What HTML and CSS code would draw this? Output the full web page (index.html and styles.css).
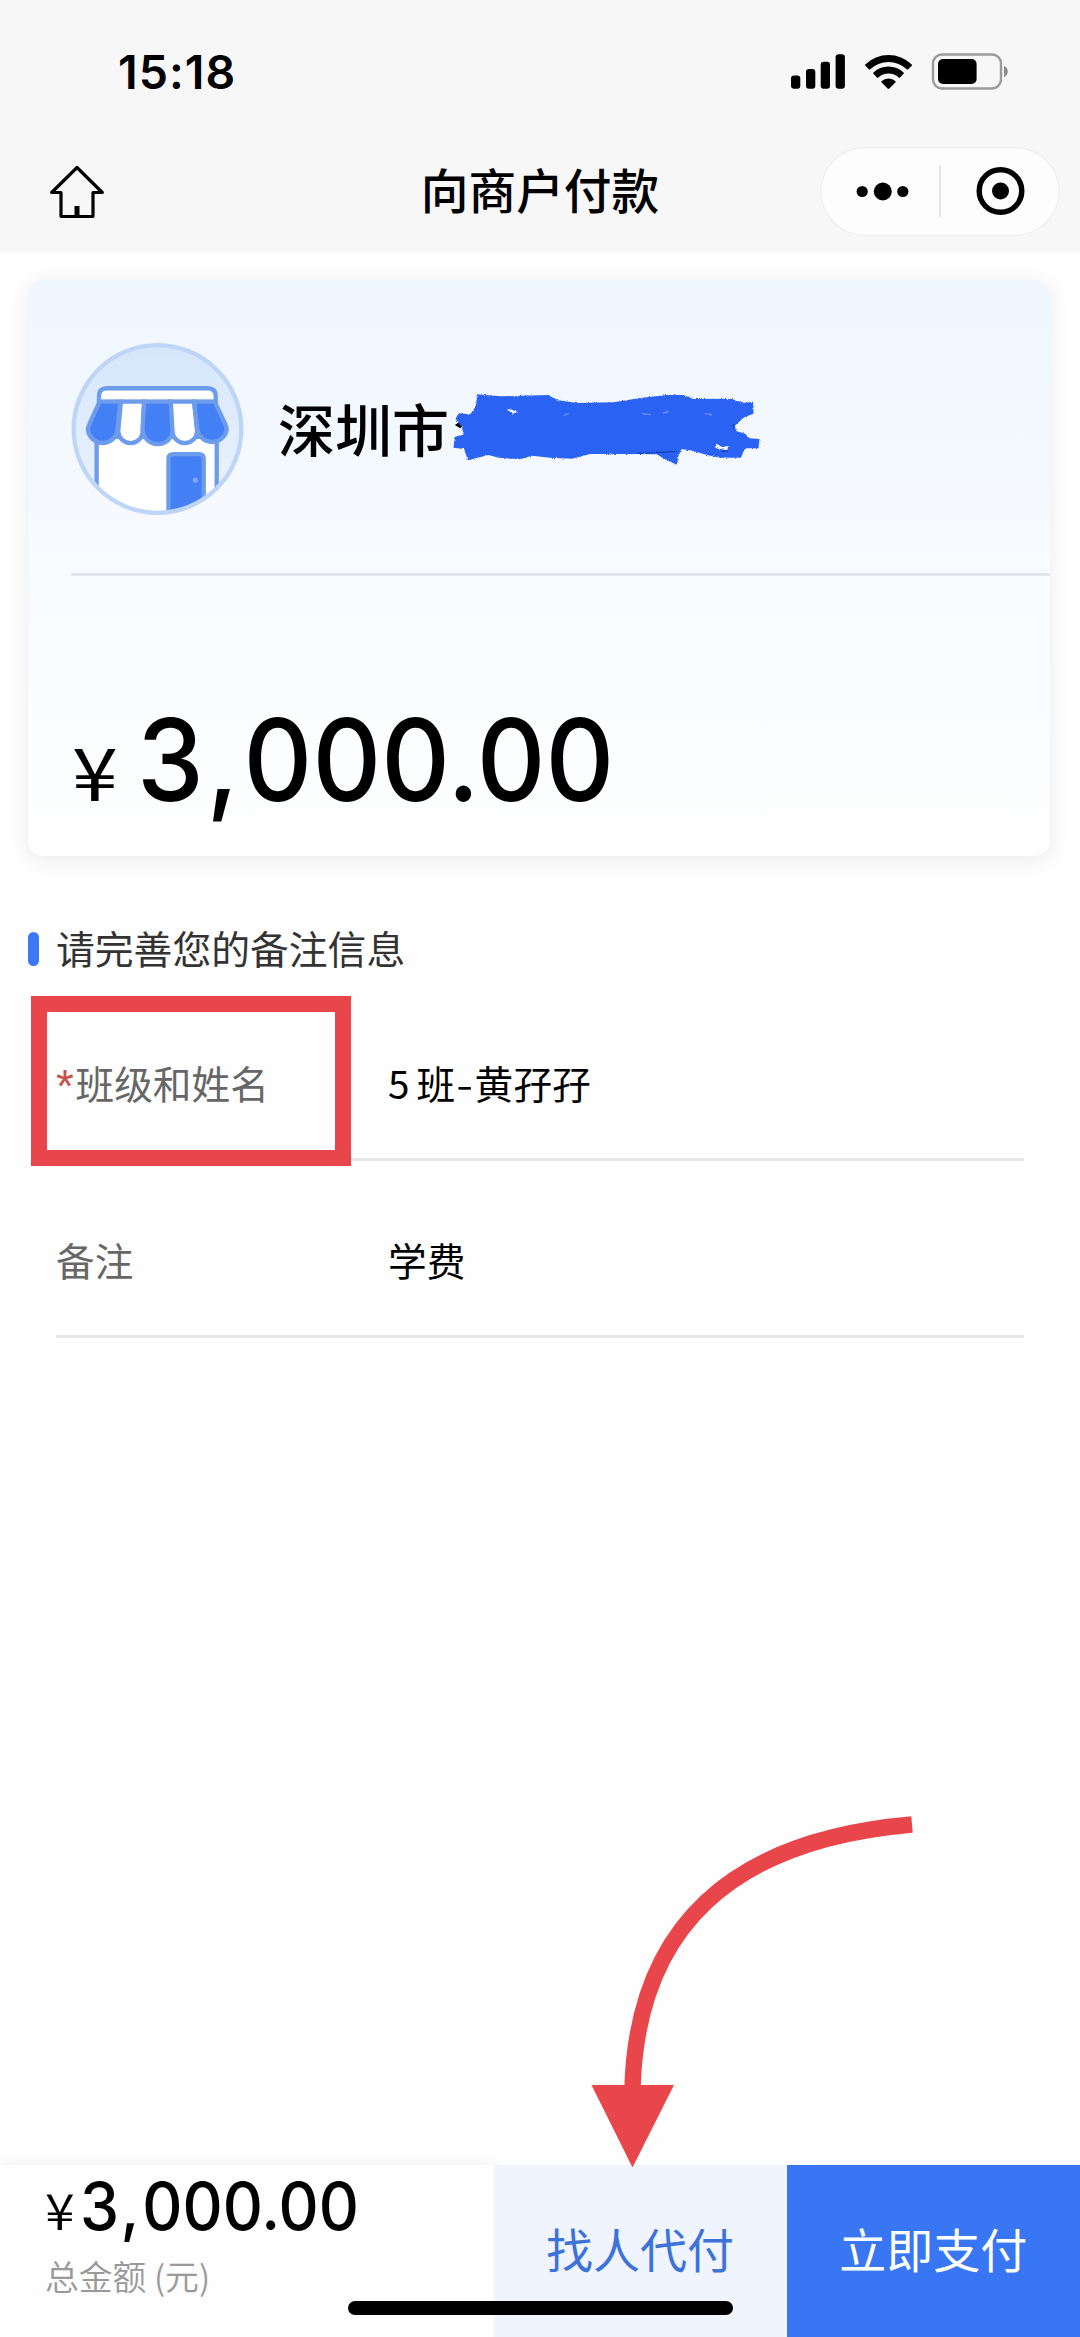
FILE: index.html
```html
<!DOCTYPE html>
<html lang="zh-CN">
<head>
<meta charset="utf-8">
<title>向商户付款</title>
<link rel="stylesheet" href="styles.css">
</head>
<body>
<div class="screen">
  <header class="top">
    <div class="status">
      <span class="time">15:18</span>
      <svg class="status-icons" viewBox="0 0 218 37" width="218" height="37">
        <rect x="0" y="22.5" width="9.3" height="13.2" rx="3"/>
        <rect x="15" y="16" width="9.3" height="19.7" rx="3"/>
        <rect x="29.7" y="8.7" width="9.3" height="27" rx="3"/>
        <rect x="44.6" y="1.3" width="9.3" height="34.4" rx="3"/>
        <path d="M74.2 11.4a33.5 33.5 0 0 1 46.6 0.1l.2.9-4 4.2-.9-.1a27 27 0 0 0-37.2 0l-.9.1-4-4.3zM82.2 19.7a22 22 0 0 1 30.6 0v.9l-4 4.1h-.9a15.3 15.3 0 0 0-20.8 0h-.9l-4-4.1zM90.4 28.3a10.5 10.5 0 0 1 14.2 0v1l-6.5 6.5h-1.2l-6.5-6.5z"/>
        <rect x="142" y="1.5" width="68" height="34" rx="9" fill="none" stroke="#9b9b9b" stroke-width="2.4"/>
        <rect x="147" y="6" width="38.6" height="25" rx="5"/>
        <path d="M213 13c5 1.500 5 9.500 0 11z" fill="#8c8c8c"/>
      </svg>
    </div>
    <div class="nav">
      <svg class="home" viewBox="0 0 54 54" width="54" height="54">
        <path d="M27 2.500 1.700 27.500H11v23q0 1 1 1h30q1 0 1-1v-23h9.300z" fill="none" stroke="#000" stroke-width="3.200" stroke-linejoin="round"/>
        <path d="M24.500 41h5v11h-5z"/>
      </svg>
      <h1 class="title">向商户付款</h1>
      <div class="capsule">
        <svg viewBox="0 0 240 88" width="240" height="88">
          <circle cx="42.200" cy="44.500" r="5.600"/><circle cx="62.800" cy="44.500" r="9"/><circle cx="82.800" cy="44.500" r="5.600"/>
          <path d="M120 18v52" stroke="#dedede" stroke-width="1.500"/>
          <circle cx="180.500" cy="44" r="21.300" fill="none" stroke="#000" stroke-width="5.400"/><circle cx="180.500" cy="44" r="8.500"/>
        </svg>
      </div>
    </div>
  </header>

  <main class="content">
    <section class="card">
      <div class="merchant">
        <svg class="shop" viewBox="153 218 518 517" width="173" height="172">
          <defs>
            <clipPath id="disc"><circle cx="412" cy="476.500" r="250"/></clipPath>
            <linearGradient id="sky" x1="0" y1="0" x2="0" y2="1"><stop offset="0" stop-color="#d5e6fc"/><stop offset="1" stop-color="#ecf4ff"/></linearGradient>
          </defs>
          <circle cx="412" cy="476.500" r="250" fill="url(#sky)"/>
          <g clip-path="url(#disc)" stroke="#6d9cec" stroke-width="13">
            <path d="M229 500V750H590V500z" fill="#fff"/>
            <path d="M445 750V566q0-14 14-14h78q14 0 14 14v184z" fill="#437ff5"/>
            <path d="M236 395v-17q0-24 24-24h303q24 0 24 24v17z" fill="#fff"/>
            <path d="M238 394h62l-8 78v8a45 45 0 0 1-89 0q0-10 4-18z" fill="#437ff5"/>
            <path d="M302 394h70l-4 88a37 37 0 0 1-74 0z" fill="#fff"/>
            <path d="M372 394h80l7 82a46 46 0 0 1-92 0z" fill="#437ff5"/>
            <path d="M452 394h70l9 88a37 37 0 0 1-74 0z" fill="#fff"/>
            <path d="M522 394h62l32 69q4 8 4 17a45 45 0 0 1-88 0z" fill="#437ff5"/>
            <circle cx="526" cy="630" r="8" fill="#78a8ff" stroke="none"/>
          </g>
          <circle cx="412" cy="476.500" r="252" fill="none" stroke="#bfd5f7" stroke-width="13"/>
        </svg>
        <span class="name">深圳市</span>
        <svg class="redaction" viewBox="90 120 950 240" width="317" height="80">
          <defs><filter id="rough" x="-5%" y="-10%" width="110%" height="120%"><feTurbulence type="fractalNoise" baseFrequency=".5" numOctaves="2" seed="4"/><feDisplacementMap in="SourceGraphic" scale="8" xChannelSelector="R" yChannelSelector="G"/></filter></defs>
          <path d="M104 228 158 192 169 165 178 180 120 238z"/>
          <g filter="url(#rough)">
            <path fill="#2a62f3" d="M170 136 240 142 385 138 410 153 470 162 580 160 660 147 740 138 790 138 820 150 880 149 935 150 970 162 999 158 1000 194 972 205 944 230 948 246 975 254 988 268 1018 270 1015 298 975 298 962 326 900 326 860 318 820 306 785 300 775 320 770 347 738 333 710 316 600 315 510 315 455 329 390 326 335 320 300 331 235 326 205 318 143 334 132 300 100 296 104 264 130 255 124 230 106 210 115 193 150 196 168 172z"/>
            <path fill="#f4f8ff" d="M885 297 890 284 905 294 925 291 921 304zM258 180 275 182 292 189 278 194z"/>
            <path d="M430 199 445 195M665 193l25 4M728 192l18-4M855 194l20 4" stroke="#6a91f5" stroke-width="4" fill="none"/>
            <path d="M650 313 770 308M939 226v12M903 307h20" stroke="#163fb4" stroke-width="4" fill="none"/>
          </g>
        </svg>
      </div>
      <div class="amount"><span class="yen">¥</span><span class="digits">3<span class="comma">,</span>000.00</span></div>
    </section>

    <h2 class="section-title">请完善您的备注信息</h2>
    <div class="fields">
      <div class="field">
        <span class="label"><i class="star">*</i>班级和姓名</span>
        <span class="value"><span class="num">5</span>班<span class="dash">-</span>黄孖孖</span>
        <div class="highlight"></div>
      </div>
      <div class="field">
        <span class="label">备注</span>
        <span class="value">学费</span>
      </div>
    </div>
  </main>

  <footer class="paybar">
    <div class="total">
      <div class="sum"><span class="yen">¥</span><span class="digits">3<span class="comma">,</span>000.00</span></div>
      <div class="caption">总金额 (元)</div>
    </div>
    <div class="button ask">找人代付</div>
    <div class="button pay">立即支付</div>
    <svg class="arrow" viewBox="0 0 340 360" width="340" height="360" fill="#e8464b">
      <path d="M331 17.500Q59 41 51.500 280" fill="none" stroke="#e8464b" stroke-width="16.400"/>
      <path d="M10.500 278h82.500L51.500 360.500z"/>
    </svg>
    <div class="home-indicator"></div>
  </footer>
</div>
</body>
</html>
```
FILE: styles.css
```css
* { box-sizing: border-box; }
body { margin: 0; background: #fefefe; color: #000; font-family: "Noto Sans CJK SC", sans-serif; }
.screen { width: 1080px; height: 2337px; display: flex; flex-direction: column; overflow: hidden; }
.top { height: 252px; background: #f7f7f7; flex: none; }
.status { height: 147px; padding: 53px 71px 0 118px; display: flex; justify-content: space-between; align-items: flex-start; }
.time { font: 600 46.500px/38px Inter, sans-serif; letter-spacing: 1px; }
.nav { height: 88px; padding: 0 20px 0 50px; display: grid; grid-template-columns: 240px 1fr 240px; align-items: center; }
.home { display: block; }
.title { margin: 0; padding: 0 30px 5px 0; font-size: 47.700px; line-height: 70px; font-weight: 500; text-align: center; }
.capsule { height: 89px; border-radius: 45px; background: #fdfdfd; box-shadow: inset 0 0 0 1.500px #f0f0f0; }
.capsule svg { display: block; }
.content { flex: 1; }
.card { margin: 28px 30px 0 28px; height: 576px; border-radius: 16px; background: linear-gradient(#eef6ff, #f5f9ff 35%, #fafcff 65%, #fefefe); box-shadow: 0 4px 20px rgba(0,0,0,.08); }
.merchant { margin-left: 43px; height: 296px; padding-top: 4px; border-bottom: 3px solid #e4e6e9; display: flex; align-items: center; }
.name { margin-left: 34px; padding-bottom: 3px; font-size: 57px; line-height: 80px; font-weight: 500; }
.redaction { margin-left: 1px; }
.amount { padding: 34px 0 0 44px; height: 280px; display: flex; align-items: baseline; line-height: 300px; }
.yen, .digits { transform-origin: left center; }
.digits { font-family: Inter, sans-serif; font-weight: 550; }
.comma { margin: 0 .045em 0 .025em; }
.amount .yen { font-size: 73px; width: 65px; font-weight: 400; transform: scaleX(1.13); }
.amount .digits { font-size: 114px; transform: scaleX(.935); }
.section-title { margin: 66px 0 0 28px; font-size: 38.800px; line-height: 50px; padding-bottom: 6px; font-weight: 400; color: #333; display: flex; align-items: center; gap: 17px; }
.section-title::before { content: ""; width: 11px; height: 34px; border-radius: 6px; background: #3c78f5; position: relative; top: 2px; }
.fields { margin: 6px 56px 0; }
.field { position: relative; height: 177px; padding-top: 22px; border-bottom: 3px solid #e6e6e6; display: flex; align-items: center; font-size: 38.700px; line-height: 56px; }
.label { width: 332px; height: 56px; color: #666; display: flex; }
.star { color: #c9514b; font-style: normal; width: 19.500px; font: 500 46px/64px "Liberation Sans", sans-serif; }
.highlight { position: absolute; left: -25px; top: 12px; width: 320px; height: 170px; border: 16.500px solid #e8464b; }
.num { margin-right: 7px; }
.dash { display: inline-block; margin: 0 3px; transform: scaleX(1.25); }
.paybar { position: relative; flex: none; height: 172px; display: grid; grid-template-columns: 493.500px 293px 1fr; }
.total { padding: 0 0 0 45px; background: #fefefe; box-shadow: 0 -4px 12px rgba(0,0,0,.04); }
.sum { height: 86px; line-height: 82px; display: flex; align-items: baseline; }
.sum .yen { font-size: 50px; width: 34.500px; font-weight: 350; transform: scaleX(1.08); }
.sum .digits { font-size: 66px; transform: scaleX(.944); }
.caption { font-size: 33.800px; line-height: 50px; color: #999; font-weight: 350; }
.button { display: flex; justify-content: center; padding-top: 48px; font-size: 47px; line-height: 70px; }
.ask { background: #eff4ff; color: #3d73d8; }
.pay { background: #3976f4; color: #fff; }
.arrow { position: absolute; left: 581px; top: -358px; }
.home-indicator { position: absolute; left: 348px; top: 136px; width: 385px; height: 14px; border-radius: 7px; background: #000; }
```
